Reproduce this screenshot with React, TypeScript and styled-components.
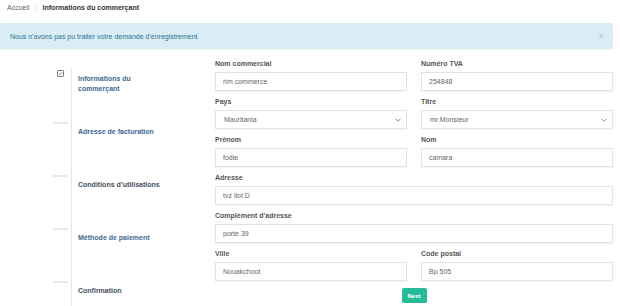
import React from "react";
import styled, { createGlobalStyle } from "styled-components";

const GlobalStyle = createGlobalStyle`
  html, body {
    margin: 0;
    padding: 0;
    background: #fff;
  }
  body {
    font-family: "Liberation Sans", Arial, sans-serif;
    overflow: hidden;
  }
`;

type StepItem = { label: string; tone: "link" | "muted"; done?: boolean };

const steps: StepItem[] = [
  { label: "Informations du commerçant", tone: "link", done: true },
  { label: "Adresse de facturation", tone: "link" },
  { label: "Conditions d’utilisations", tone: "muted" },
  { label: "Méthode de paiement", tone: "link" },
  { label: "Confirmation", tone: "muted" },
];

type FieldDef = { label: string; value: string; select?: boolean; wide?: boolean };

const fields: FieldDef[] = [
  { label: "Nom commercial", value: "rim commerce" },
  { label: "Numéro TVA", value: "254848" },
  { label: "Pays", value: "Mauritania", select: true },
  { label: "Titre", value: "mr.Monsieur", select: true },
  { label: "Prénom", value: "fodie" },
  { label: "Nom", value: "camara" },
  { label: "Adresse", value: "tvz ilot D", wide: true },
  { label: "Complément d'adresse", value: "porte 39", wide: true },
  { label: "Ville", value: "Nouakchoot" },
  { label: "Code postal", value: "Bp 505" },
];

function CheckIcon() {
  return (
    <svg width="7" height="7" viewBox="0 0 14 14" fill="none">
      <rect x="1" y="1" width="12" height="12" rx="1.5" stroke="#555" strokeWidth="1.6" />
      <path d="M3.8 7.2l2.2 2.2 4.4-4.8" stroke="#555" strokeWidth="1.6" />
    </svg>
  );
}

function Chevron() {
  return (
    <svg width="6" height="4" viewBox="0 0 12 8" fill="none">
      <path d="M1 1.5l5 5 5-5" stroke="#666" strokeWidth="1.6" />
    </svg>
  );
}

export default function App() {
  return (
    <Page>
      <GlobalStyle />
      <Breadcrumb>
        <Crumb>Accueil</Crumb>
        <Divider>/</Divider>
        <Current>Informations du commerçant</Current>
      </Breadcrumb>

      <Alert>
        <span>Nous n'avons pas pu traiter votre demande d'enregistrement</span>
        <Close>×</Close>
      </Alert>

      <Content>
        <Stepper>
          {steps.map((s, i) => (
            <Step key={i}>
              <Marker>{s.done ? <CheckIcon /> : i > 0 ? <Rule /> : null}</Marker>
              <StepBody>
                <StepLabel tone={s.tone}>{s.label}</StepLabel>
              </StepBody>
            </Step>
          ))}
        </Stepper>

        <FormArea>
          <FormGrid>
            {fields.map((f, i) => (
              <Field key={i} wide={f.wide}>
                <Label>{f.label}</Label>
                {f.select ? (
                  <SelectBox>
                    <span>{f.value}</span>
                    <Chevron />
                  </SelectBox>
                ) : (
                  <Input readOnly value={f.value} />
                )}
              </Field>
            ))}
          </FormGrid>
          <Actions>
            <NextButton>Next</NextButton>
          </Actions>
        </FormArea>
      </Content>
    </Page>
  );
}

const Page = styled.div`
  width: 620px;
  height: 306px;
  overflow: hidden;
  padding: 3px 7px 0 0;
  box-sizing: border-box;
  color: #555;
`;

const Breadcrumb = styled.div`
  display: flex;
  align-items: center;
  padding-left: 7px;
  font-size: 7px;
  line-height: 10px;
`;

const Crumb = styled.span`
  color: #666;
`;

const Divider = styled.span`
  color: #ccc;
  margin: 0 6px 0 5px;
`;

const Current = styled.span`
  color: #333;
  font-weight: bold;
`;

const Alert = styled.div`
  margin-top: 10px;
  height: 26px;
  display: flex;
  align-items: center;
  justify-content: space-between;
  padding: 0 9px 0 10px;
  background: #d9edf7;
  color: #31708f;
  font-size: 7px;
  border-radius: 2px;
  box-shadow: 0 1px 1px rgba(0, 0, 0, 0.04);
`;

const Close = styled.span`
  color: #b9c6cd;
  font-size: 10px;
`;

const Content = styled.div`
  display: flex;
  margin-top: 10px;
`;

const Stepper = styled.div`
  width: 162px;
  margin-left: 53px;
  padding-top: 10px;
  flex-shrink: 0;
`;

const Step = styled.div`
  display: flex;
  height: 53px;
`;

const Marker = styled.div`
  width: 18px;
  display: flex;
  align-items: flex-start;
  padding-left: 4px;
  padding-top: 1px;
  box-sizing: border-box;
`;

const Rule = styled.div`
  width: 15px;
  height: 2px;
  margin-left: -4px;
  margin-top: -1px;
  background: #e9e9e9;
`;

const StepBody = styled.div`
  border-left: 1px solid #e6e6e6;
  padding: 5px 0 0 6px;
`;

const StepLabel = styled.div<{ tone: "link" | "muted" }>`
  width: 90px;
  font-size: 7px;
  line-height: 10px;
  font-weight: bold;
  color: ${({ tone }) => (tone === "link" ? "#3e6a94" : "#45515d")};
`;

const FormArea = styled.div`
  flex: 1;
`;

const FormGrid = styled.div`
  display: grid;
  grid-template-columns: 1fr 1fr;
  column-gap: 14px;
  row-gap: 6px;
`;

const Field = styled.div<{ wide?: boolean }>`
  display: flex;
  flex-direction: column;
  grid-column: ${({ wide }) => (wide ? "1 / -1" : "auto")};
`;

const Label = styled.label`
  font-size: 7px;
  line-height: 10px;
  font-weight: bold;
  color: #555;
  margin-bottom: 3px;
`;

const Input = styled.input`
  height: 19px;
  box-sizing: border-box;
  border: 1px solid #e3e3e3;
  border-radius: 0;
  padding: 0 7px;
  font-family: "Liberation Sans", Arial, sans-serif;
  font-size: 7px;
  color: #666;
  background: #fff;
  outline: none;
  box-shadow: 0 1px 1px rgba(0, 0, 0, 0.04);
`;

const SelectBox = styled.div`
  height: 19px;
  box-sizing: border-box;
  border: 1px solid #e3e3e3;
  padding: 0 5px 0 8px;
  display: flex;
  align-items: center;
  justify-content: space-between;
  font-size: 7px;
  color: #666;
  background: #fff;
  box-shadow: 0 1px 1px rgba(0, 0, 0, 0.04);
`;

const Actions = styled.div`
  display: flex;
  justify-content: center;
  margin-top: 7px;
`;

const NextButton = styled.button`
  width: 25px;
  height: 15px;
  padding: 0;
  border: none;
  border-radius: 2px;
  background: #26b99a;
  color: #fff;
  font-family: "Liberation Sans", Arial, sans-serif;
  font-size: 6px;
  font-weight: bold;
`;
